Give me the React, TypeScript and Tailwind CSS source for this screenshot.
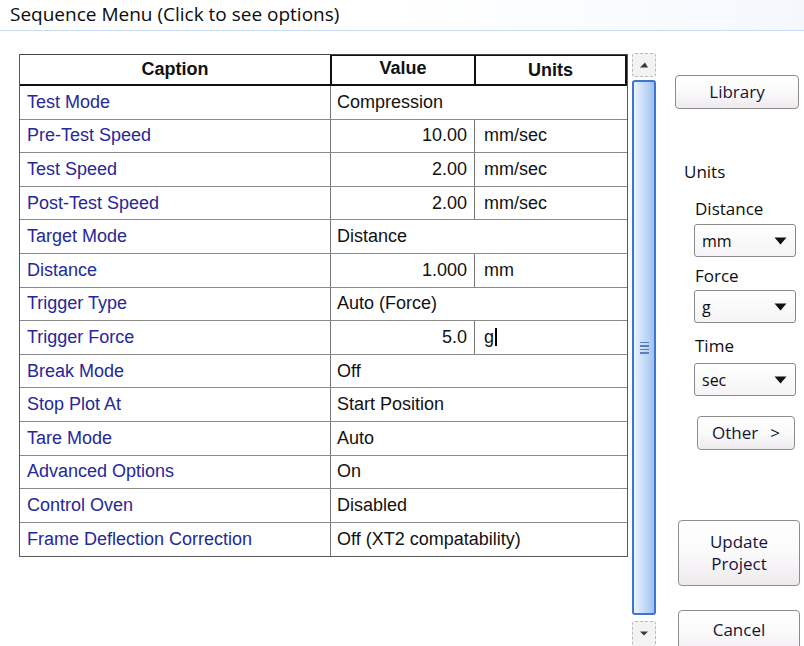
import React from "react";

type Row = { caption: string; value: string; units?: string; cursor?: boolean };

const rows: Row[] = [
  { caption: "Test Mode", value: "Compression" },
  { caption: "Pre-Test Speed", value: "10.00", units: "mm/sec" },
  { caption: "Test Speed", value: "2.00", units: "mm/sec" },
  { caption: "Post-Test Speed", value: "2.00", units: "mm/sec" },
  { caption: "Target Mode", value: "Distance" },
  { caption: "Distance", value: "1.000", units: "mm" },
  { caption: "Trigger Type", value: "Auto (Force)" },
  { caption: "Trigger Force", value: "5.0", units: "g", cursor: true },
  { caption: "Break Mode", value: "Off" },
  { caption: "Stop Plot At", value: "Start Position" },
  { caption: "Tare Mode", value: "Auto" },
  { caption: "Advanced Options", value: "On" },
  { caption: "Control Oven", value: "Disabled" },
  { caption: "Frame Deflection Correction", value: "Off (XT2 compatability)" },
];

const tableFont = { fontFamily: '"Liberation Sans", Arial, sans-serif' };

function Caret() {
  return (
    <svg width="13" height="8" viewBox="0 0 13 8" className="shrink-0">
      <path d="M0.5 0.5 H12.5 L6.5 7.5 Z" fill="#111" />
    </svg>
  );
}

function Dropdown({ label }: { label: string }) {
  return (
    <div className="flex h-[33px] w-[102px] items-center justify-between rounded-[3px] border border-[#8a8a8a] bg-gradient-to-b from-white to-[#f6f4f6] pl-[7px] pr-[8px] text-[16px] text-[#0c0c0c]">
      <span className="mt-[1px]">{label}</span>
      <Caret />
    </div>
  );
}

function Button({ children, className }: { children: React.ReactNode; className: string }) {
  return (
    <div
      className={
        "flex items-center justify-center rounded-[4px] border border-[#8d8d8d] bg-gradient-to-b from-white via-[#fbfafb] to-[#eeeaee] text-[17px] leading-[22px] text-[#141438] " +
        className
      }
    >
      {children}
    </div>
  );
}

function ScrollBar() {
  return (
    <div className="mt-[-1px] flex h-[594px] w-[24px] flex-col">
      <div className="flex h-[24px] items-center justify-center rounded-[3px] border border-dashed border-[#b9b9b9] bg-[#f3f3f3]">
        <svg width="10" height="6" viewBox="0 0 10 6">
          <path d="M1 5.5 L6 0.5 L9 5.5 Z" fill="#3a3a3a" />
        </svg>
      </div>
      <div className="mt-[3px] flex h-[535px] items-center justify-center rounded-[3px] border-2 border-[#3f74d2] bg-gradient-to-r from-[#e9f2fd] via-[#c6dcf7] to-[#9fc1ef]">
        <div className="flex flex-col gap-[2px]">
          <div className="h-[1.5px] w-[9px] bg-[#5a7fb5]" />
          <div className="h-[1.5px] w-[9px] bg-[#5a7fb5]" />
          <div className="h-[1.5px] w-[9px] bg-[#5a7fb5]" />
          <div className="h-[1.5px] w-[9px] bg-[#5a7fb5]" />
        </div>
      </div>
      <div className="mt-[6px] flex h-[26px] items-center justify-center rounded-[3px] border border-dashed border-[#b9b9b9] bg-[#f3f3f3]">
        <svg width="10" height="6" viewBox="0 0 10 6">
          <path d="M1 0.5 L9 0.5 L5 4.5 Z" fill="#3a3a3a" />
        </svg>
      </div>
    </div>
  );
}

function SequenceTable() {
  return (
    <div className="w-[609px] border-l border-r border-b border-[#5a5a5a]" style={tableFont}>
      {/* header */}
      <div className="flex h-[32px] border-t border-b-[2px] border-t-[#444] border-b-[#111] text-[18px] font-bold text-[#111]">
        <div className="flex w-[310px] items-center justify-center">Caption</div>
        <div className="flex w-[144px] items-center justify-center border-l-[2px] border-t border-[#111] pb-[3px]">
          Value
        </div>
        <div className="flex flex-1 items-center justify-center border-l-[2px] border-r-[2px] border-t border-[#111]">
          Units
        </div>
      </div>
      {rows.map((r, i) => (
        <div
          key={r.caption}
          className={
            "flex h-[33.6px] text-[18px] " + (i < rows.length - 1 ? "border-b border-[#8a8a8a]" : "")
          }
        >
          <div className="flex w-[310px] items-center pl-[7px] text-[#25289a]">{r.caption}</div>
          {r.units === undefined ? (
            <div className="flex flex-1 items-center border-l border-[#777] pl-[6px] text-[#121212]">{r.value}</div>
          ) : (
            <>
              <div className="flex w-[144px] items-center justify-end border-l border-[#777] pr-[7px] text-[#121212]">
                {r.value}
              </div>
              <div className="flex flex-1 items-center border-l border-[#777] pl-[9px] text-[#121212]">
                {r.units}
                {r.cursor && <span className="ml-[1px] h-[18px] w-[1.5px] bg-black" />}
              </div>
            </>
          )}
        </div>
      ))}
    </div>
  );
}

function SidePanel() {
  return (
    <div
      className="ml-[19px] flex w-[126px] flex-col text-[17px] text-[#0e0e0e]"
      style={{ fontFamily: '"Open Sans", "Noto Sans", sans-serif' }}
    >
      <Button className="mt-[21px] h-[34px] w-[124px]">Library</Button>
      <div className="ml-[9px] mt-[52px] leading-[22px]">Units</div>
      <div className="ml-[20px] mt-[15px] leading-[22px]">Distance</div>
      <div className="ml-[19px] mt-[4px]">
        <Dropdown label="mm" />
      </div>
      <div className="ml-[20px] mt-[8px] leading-[22px]">Force</div>
      <div className="ml-[19px] mt-[3px]">
        <Dropdown label="g" />
      </div>
      <div className="ml-[20px] mt-[12px] leading-[22px]">Time</div>
      <div className="ml-[19px] mt-[6px]">
        <Dropdown label="sec" />
      </div>
      <Button className="ml-[22px] mt-[20px] h-[34px] w-[98px]">
        <span className="flex gap-[12px]">
          <span>Other</span>
          <span>&gt;</span>
        </span>
      </Button>
      <Button className="ml-[3px] mt-[70px] h-[66px] w-[122px] flex-col">
        <span>Update</span>
        <span>Project</span>
      </Button>
      <Button className="ml-[3px] mt-[24px] h-[46px] w-[122px] items-start pt-[8px]">Cancel</Button>
    </div>
  );
}

export default function App() {
  return (
    <div className="relative h-[646px] w-[804px] overflow-hidden bg-white">
      <div className="flex h-[31px] items-center border-b border-[#c9dcf1] bg-gradient-to-r from-white via-white to-[#f4f8fd] pl-[10px]">
        <span
          className="mt-[-2px] text-[19px] text-[#0c0c0c]"
          style={{ fontFamily: '"Open Sans", "Noto Sans", sans-serif' }}
        >
          Sequence Menu (Click to see options)
        </span>
      </div>
      <div className="flex pt-[23px]">
        <div className="ml-[19px]">
          <SequenceTable />
        </div>
        <div className="ml-[4px]">
          <ScrollBar />
        </div>
        <SidePanel />
      </div>
    </div>
  );
}
